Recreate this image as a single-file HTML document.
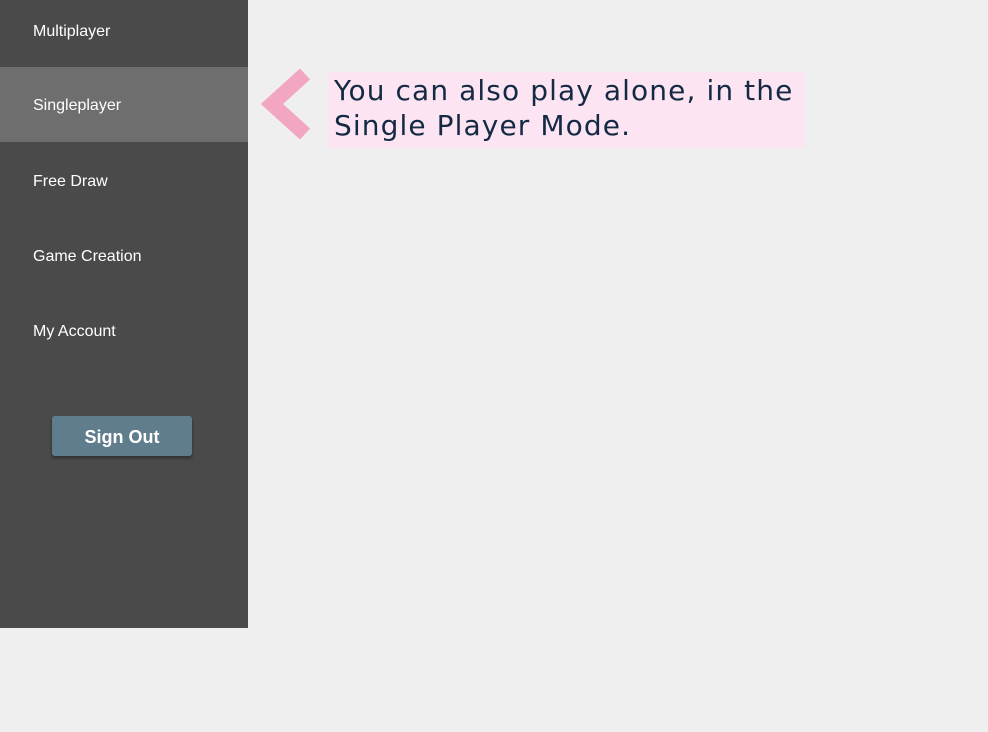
<!DOCTYPE html>
<html><head><style>
body{margin:0;width:988px;height:732px;background:#efefef;font-family:"Liberation Sans",sans-serif;overflow:hidden;position:relative}
.side{position:absolute;left:0;top:0;width:248px;height:628px;background:#4a4a4a}
.item{position:absolute;left:0;width:248px;height:75px;color:#fff;font-size:16px;line-height:77px;padding-left:33px;box-sizing:border-box}
.sel{background:#6e6e6e}
.btn{position:absolute;left:52px;top:416px;width:140px;height:40px;background:#5f7d8c;border-radius:3px;box-shadow:0 2px 3px rgba(0,0,0,.4);color:#fff;font-size:18px;font-weight:bold;text-align:center;line-height:43px}
.tip{position:absolute;left:328px;top:72px;width:477px;height:76px;background:#fce4f2;color:#142a44;font-family:"DejaVu Sans",sans-serif;font-size:28px;letter-spacing:1.1px;line-height:35px;padding:1px 0 0 6px;box-sizing:border-box;white-space:nowrap}
</style></head><body>
<div class="side">
<div class="item" style="top:-7px">Multiplayer</div>
<div class="item sel" style="top:67px">Singleplayer</div>
<div class="item" style="top:143px">Free Draw</div>
<div class="item" style="top:218px">Game Creation</div>
<div class="item" style="top:293px">My Account</div>
<div class="btn">Sign Out</div>
</div>
<svg style="position:absolute;left:255px;top:60px" width="70" height="90"><polyline points="50,14 17,44 50,74" fill="none" stroke="#f2a6c2" stroke-width="15"/></svg>
<div class="tip">You can also play alone, in the<br>Single Player Mode.</div>
</body></html>
